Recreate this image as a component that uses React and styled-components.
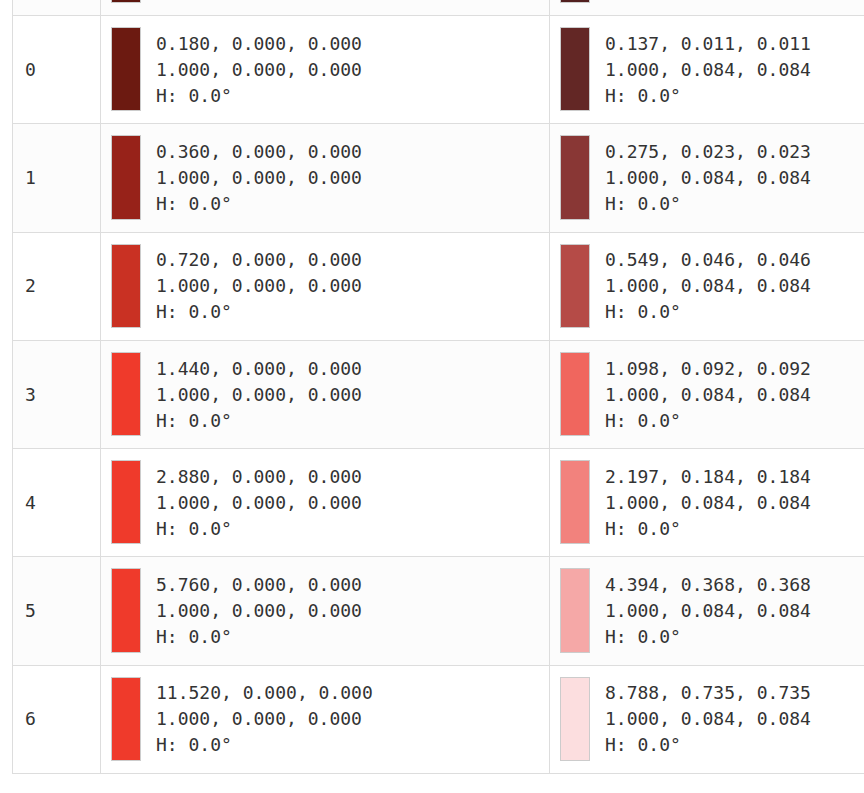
import styled, { createGlobalStyle } from "styled-components";

const GlobalStyle = createGlobalStyle`
  html, body {
    margin: 0;
    padding: 0;
    background: #fff;
    overflow: hidden;
  }
  body {
    font-family: "DejaVu Sans Mono", "Liberation Mono", monospace;
    color: #333;
  }
`;

const Page = styled.div`
  padding: 0 12px 20px 12px;
`;

// the page is scrolled so that only the bottom of the previous row shows
const Scrolled = styled.div`
  margin-top: -93.3px;
`;

const Table = styled.table`
  border-collapse: collapse;
  width: 986px;
  font-size: 18px;
  line-height: 26px;
`;

const Row = styled.tr`
  background: ${(p) => (p.$odd ? "#fcfcfc" : "#fff")};
`;

const IndexCell = styled.td`
  width: 63px;
  padding: 12px;
  border: 1px solid #ddd;
  vertical-align: middle;
  text-align: left;
`;

const ColorCell = styled.td`
  width: ${(p) => (p.$width ? `${p.$width}px` : "auto")};
  padding: 11px 12px 12px 10px;
  border: 1px solid #ddd;
  vertical-align: middle;
`;

const ColorBox = styled.div`
  display: flex;
  align-items: center;
  gap: 15px;
`;

const Swatch = styled.div`
  flex: none;
  width: 28px;
  height: 82.3px;
  border: 1px solid #ccc;
  background: ${(p) => p.$color};
`;

const Values = styled.div`
  white-space: pre;
  margin-top: 1px;
`;

const rows = [
  {
    i: -1,
    a: { c: "#5e170f", v: ["0.090, 0.000, 0.000", "1.000, 0.000, 0.000", "H: 0.0°"] },
    b: { c: "#52201f", v: ["0.069, 0.006, 0.006", "1.000, 0.084, 0.084", "H: 0.0°"] },
  },
  {
    i: 0,
    a: { c: "#6c1a11", v: ["0.180, 0.000, 0.000", "1.000, 0.000, 0.000", "H: 0.0°"] },
    b: { c: "#632725", v: ["0.137, 0.011, 0.011", "1.000, 0.084, 0.084", "H: 0.0°"] },
  },
  {
    i: 1,
    a: { c: "#972219", v: ["0.360, 0.000, 0.000", "1.000, 0.000, 0.000", "H: 0.0°"] },
    b: { c: "#893735", v: ["0.275, 0.023, 0.023", "1.000, 0.084, 0.084", "H: 0.0°"] },
  },
  {
    i: 2,
    a: { c: "#c93123", v: ["0.720, 0.000, 0.000", "1.000, 0.000, 0.000", "H: 0.0°"] },
    b: { c: "#b54b47", v: ["0.549, 0.046, 0.046", "1.000, 0.084, 0.084", "H: 0.0°"] },
  },
  {
    i: 3,
    a: { c: "#ef3a2b", v: ["1.440, 0.000, 0.000", "1.000, 0.000, 0.000", "H: 0.0°"] },
    b: { c: "#f0665e", v: ["1.098, 0.092, 0.092", "1.000, 0.084, 0.084", "H: 0.0°"] },
  },
  {
    i: 4,
    a: { c: "#ef3a2b", v: ["2.880, 0.000, 0.000", "1.000, 0.000, 0.000", "H: 0.0°"] },
    b: { c: "#f2827d", v: ["2.197, 0.184, 0.184", "1.000, 0.084, 0.084", "H: 0.0°"] },
  },
  {
    i: 5,
    a: { c: "#ef3a2b", v: ["5.760, 0.000, 0.000", "1.000, 0.000, 0.000", "H: 0.0°"] },
    b: { c: "#f5a8a7", v: ["4.394, 0.368, 0.368", "1.000, 0.084, 0.084", "H: 0.0°"] },
  },
  {
    i: 6,
    a: { c: "#ef3a2b", v: ["11.520, 0.000, 0.000", "1.000, 0.000, 0.000", "H: 0.0°"] },
    b: { c: "#fcdedf", v: ["8.788, 0.735, 0.735", "1.000, 0.084, 0.084", "H: 0.0°"] },
  },
];

const ColorValue = ({ color, lines }) => (
  <ColorBox>
    <Swatch $color={color} />
    <Values>{lines.join("\n")}</Values>
  </ColorBox>
);

export default function App() {
  return (
    <Page>
      <GlobalStyle />
      <Scrolled>
        <Table>
          <tbody>
            {rows.map((r) => (
              <Row key={r.i} $odd={r.i % 2 !== 0}>
                <IndexCell>{r.i < 0 ? "" : r.i}</IndexCell>
                <ColorCell $width={426}>
                  <ColorValue color={r.a.c} lines={r.a.v} />
                </ColorCell>
                <ColorCell>
                  <ColorValue color={r.b.c} lines={r.b.v} />
                </ColorCell>
              </Row>
            ))}
          </tbody>
        </Table>
      </Scrolled>
    </Page>
  );
}
